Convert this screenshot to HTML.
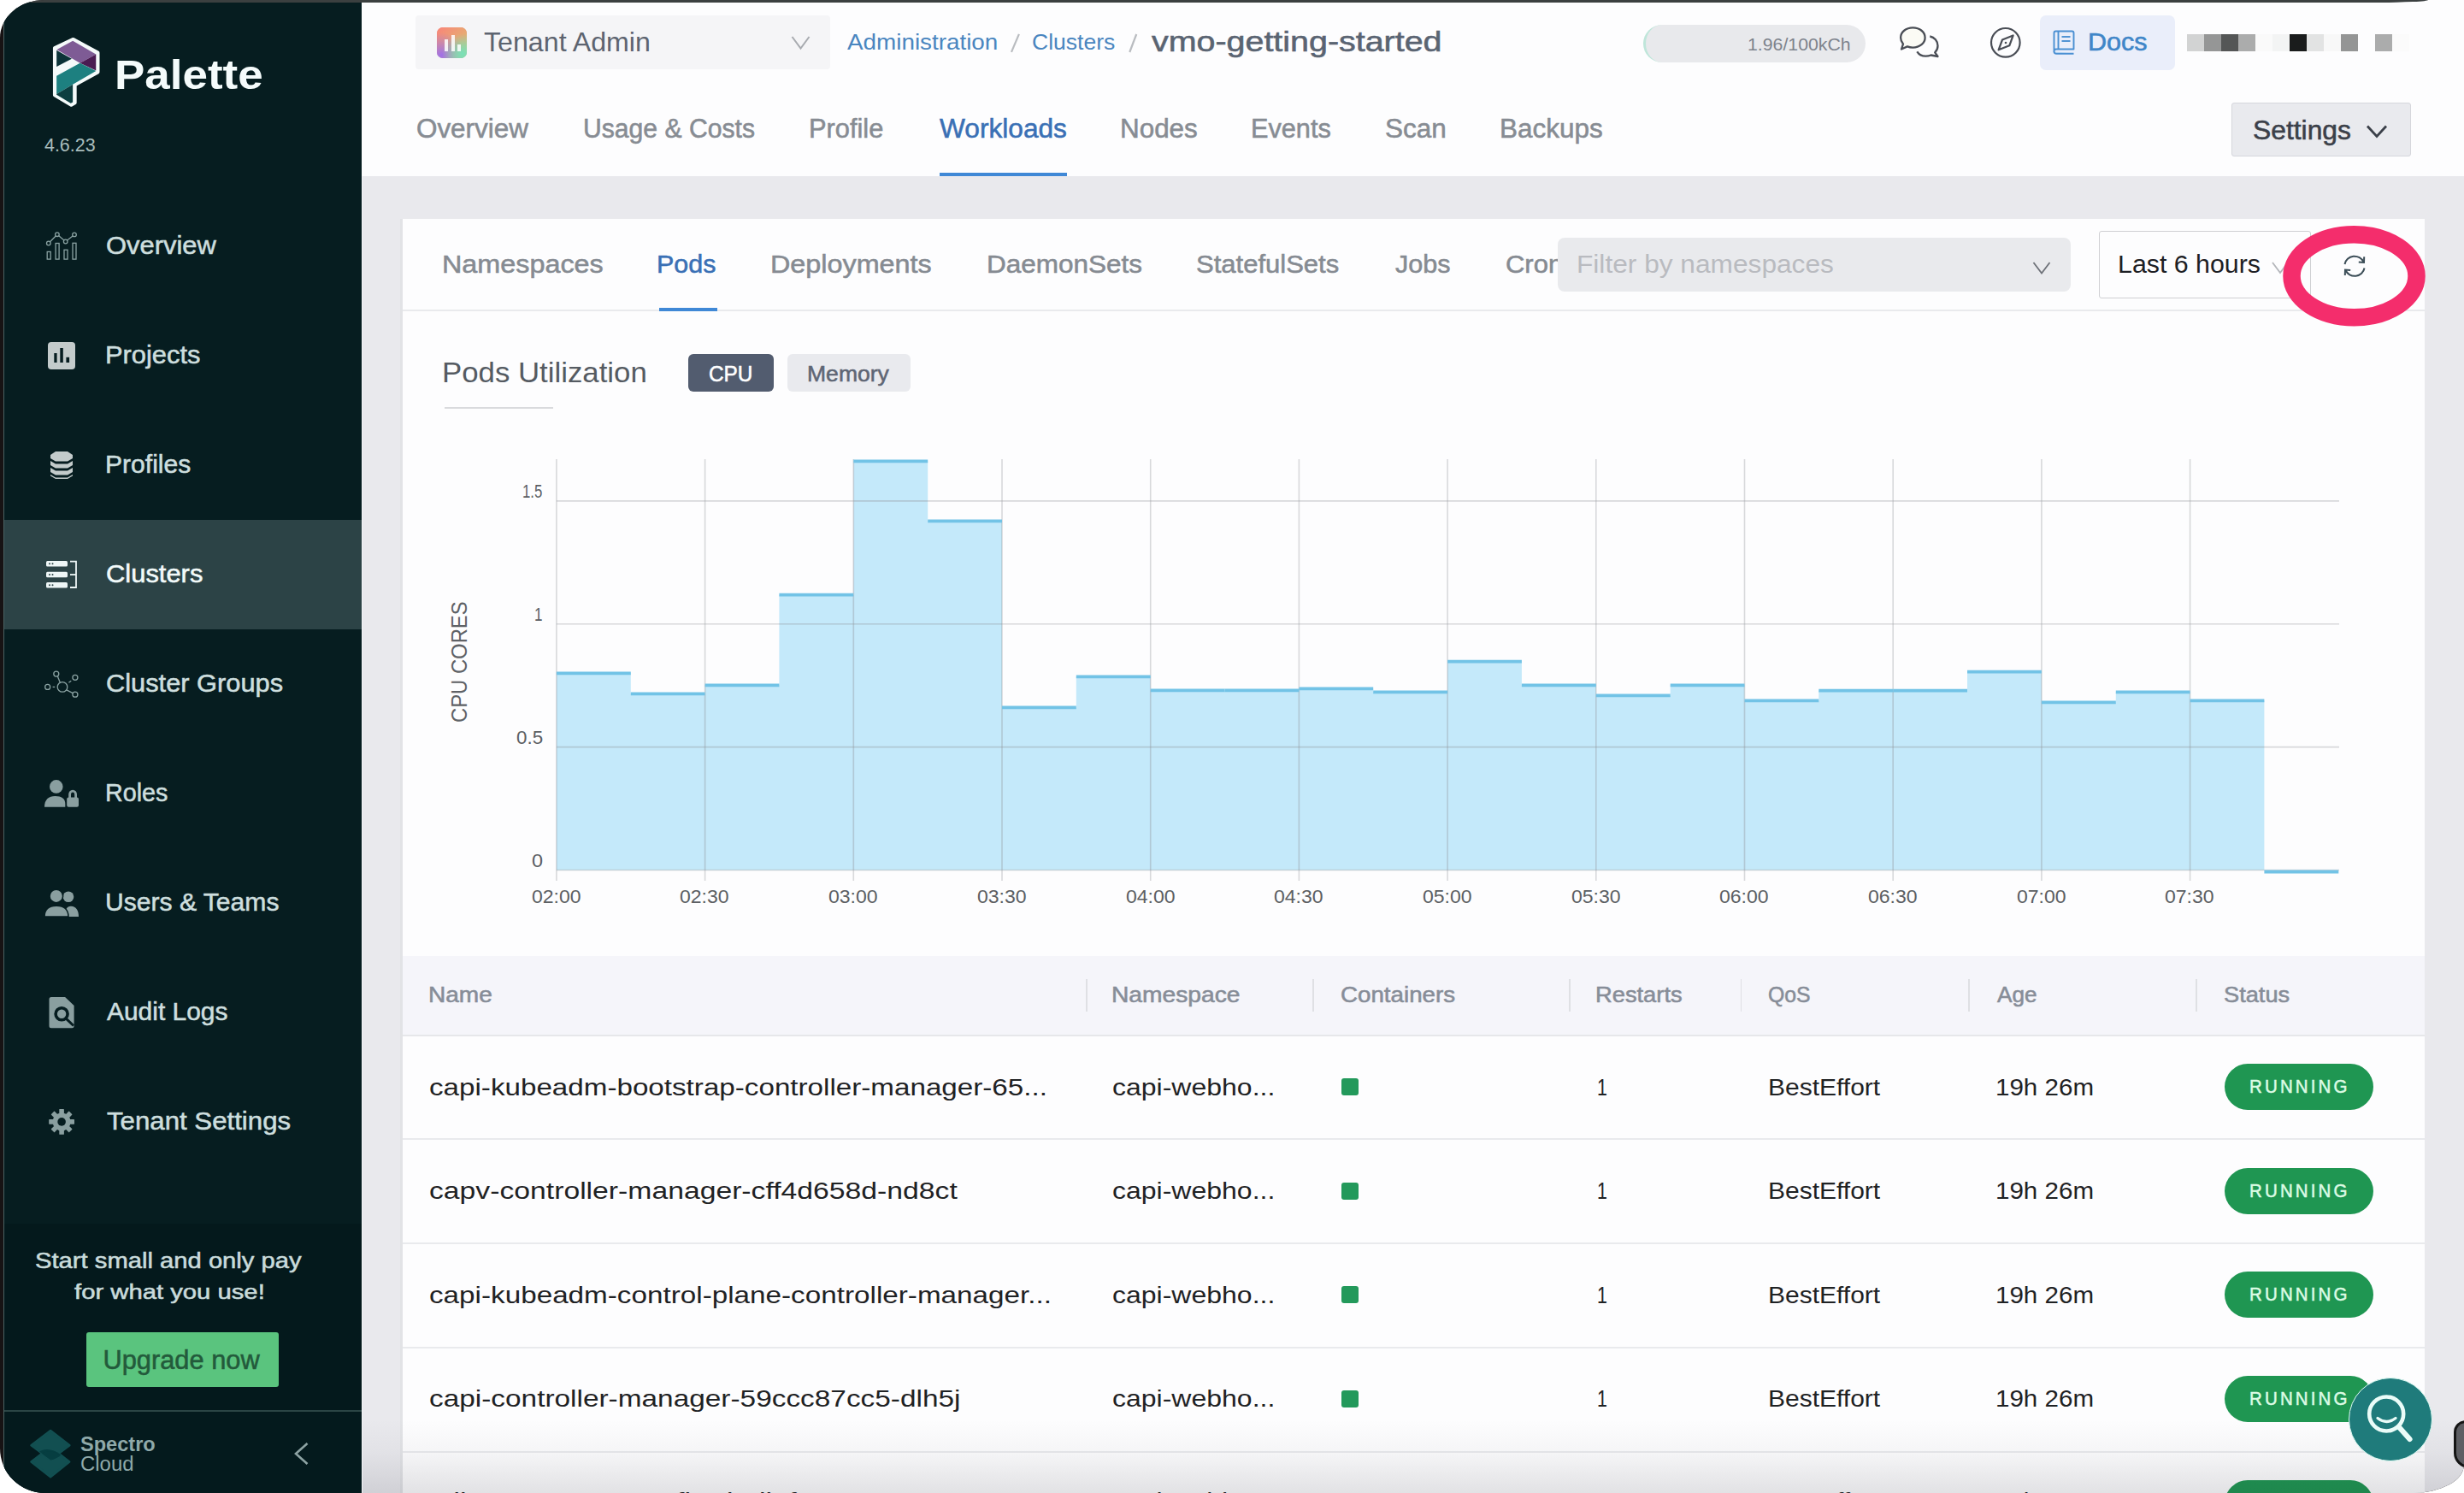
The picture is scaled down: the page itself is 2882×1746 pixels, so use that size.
<!DOCTYPE html>
<html><head><meta charset="utf-8"><style>
html,body{margin:0;padding:0;}
body{width:2882px;height:1746px;overflow:hidden;background:#fff;position:relative;font-family:"Liberation Sans",sans-serif;}
.abs{position:absolute;}
.t{position:absolute;font-family:"Liberation Sans",sans-serif;line-height:1;white-space:pre;transform-origin:0 0;}
#win{position:absolute;left:0;top:0;width:2882px;height:1746px;overflow:hidden;background:#171314;border-radius:52px 0 60px 53px / 44px 0 33px 52px;}
</style></head><body>
<div id="win">
  <!-- top line -->
  
  <!-- sidebar -->
  <div class="abs" style="left:4px;top:0;width:2px;height:1746px;background:#4a6262"></div>
  <div class="abs" style="left:5px;top:2px;width:418px;height:1744px;background:#061d20"></div>
  <div class="abs" style="left:5px;top:608px;width:418px;height:128px;background:#2c4346"></div>
  <div class="abs" style="left:5px;top:1431px;width:418px;height:219px;background:#04191c"></div>
  <div class="abs" style="left:5px;top:1649px;width:418px;height:2px;background:#2b4545"></div>
  <div class="abs" style="left:5px;top:1651px;width:418px;height:95px;background:#041a1d"></div>
  <div class="abs" style="left:101px;top:1558px;width:225px;height:64px;background:#5ac47e;border-radius:3px"></div>
  <!-- header -->
  <div class="abs" style="left:423px;top:0px;width:2459px;height:206px;background:#fdfdfe"></div>
  <div class="abs" style="left:0;top:0;width:2840px;height:2.5px;background:#3b4040;border-radius:0 0 60px 0 / 0 0 3px 0"></div>
  <div class="abs" style="left:486px;top:18px;width:485px;height:63px;background:#f5f5f7;border-radius:4px"></div>
  <div class="abs" style="left:511px;top:32px;width:35px;height:36px;border-radius:7px;background:linear-gradient(160deg,#f7867b 0%,#e0a070 30%,#b07ad0 60%,#7fd6b0 100%)"></div>
  <div class="abs" style="left:1922px;top:29px;width:260px;height:44px;background:#e8e9ec;border-radius:22px;border-left:3px solid #bfe6da;box-sizing:border-box"></div>
  <div class="abs" style="left:2386px;top:18px;width:158px;height:64px;background:#eaeefa;border-radius:7px"></div>
  <div class="abs" style="left:2558px;top:40px;width:20px;height:20px;background:#d2d3d3"></div><div class="abs" style="left:2578px;top:40px;width:20px;height:20px;background:#959696"></div><div class="abs" style="left:2598px;top:40px;width:20px;height:20px;background:#545656"></div><div class="abs" style="left:2618px;top:40px;width:20px;height:20px;background:#abacac"></div><div class="abs" style="left:2638px;top:40px;width:20px;height:20px;background:#fafafa"></div><div class="abs" style="left:2658px;top:40px;width:20px;height:20px;background:#f3f4f4"></div><div class="abs" style="left:2678px;top:40px;width:20px;height:20px;background:#1a1c1c"></div><div class="abs" style="left:2698px;top:40px;width:20px;height:20px;background:#e2e3e3"></div><div class="abs" style="left:2718px;top:40px;width:20px;height:20px;background:#f8f8f8"></div><div class="abs" style="left:2738px;top:40px;width:20px;height:20px;background:#949595"></div><div class="abs" style="left:2758px;top:40px;width:20px;height:20px;background:#fdfdfe"></div><div class="abs" style="left:2778px;top:40px;width:20px;height:20px;background:#abacac"></div><div class="abs" style="left:2798px;top:40px;width:20px;height:20px;background:#fbfbfb"></div>
  <div class="abs" style="left:1099px;top:202px;width:149px;height:4px;background:#3f88d6"></div>
  <div class="abs" style="left:2610px;top:120px;width:210px;height:63px;background:#e9eaee;border:1.5px solid #d5d7dc;border-radius:3px;box-sizing:border-box"></div>
  <!-- content bg -->
  <div class="abs" style="left:423px;top:206px;width:2459px;height:1540px;background:#e9e9ed"></div>
  <div class="abs" style="left:467.5px;top:256px;width:4px;height:1490px;background:#e2e3e6"></div>
  <!-- card -->
  <div class="abs" style="left:471px;top:256px;width:2365px;height:1490px;background:#fdfdfe"></div>
  <div class="abs" style="left:471px;top:362px;width:2365px;height:2px;background:#e9eaed"></div>
  <div class="abs" style="left:770.5px;top:359.5px;width:68.5px;height:4.5px;background:#3f88d6"></div>
  <div class="abs" style="left:2455px;top:270px;width:248px;height:79px;border:1.5px solid #cfd0d3;border-radius:3px;box-sizing:border-box"></div>
  <div class="abs" style="left:519.5px;top:476px;width:127px;height:2px;background:#d9dadd"></div>
  <div class="abs" style="left:805px;top:414px;width:100px;height:44px;background:#525c6f;border-radius:6px"></div>
  <div class="abs" style="left:921px;top:414px;width:144px;height:44px;background:#e9eaee;border-radius:6px"></div>
  <!-- table header -->
  <div class="abs" style="left:471px;top:1117.5px;width:2365px;height:93.5px;background:#f5f5fa"></div>
  <div class="abs" style="left:471px;top:1210px;width:2365px;height:2px;background:#e6e7ea"></div>
  <div class="abs" style="left:1569px;top:1261.0px;width:20px;height:20px;border-radius:3px;background:#23995b"></div>
<div class="abs" style="left:2602px;top:1244.0px;width:174px;height:54px;border-radius:27px;background:#1f9652"></div>
<div class="abs" style="left:1569px;top:1382.5px;width:20px;height:20px;border-radius:3px;background:#23995b"></div>
<div class="abs" style="left:2602px;top:1365.7px;width:174px;height:54px;border-radius:27px;background:#1f9652"></div>
<div class="abs" style="left:1569px;top:1504.0px;width:20px;height:20px;border-radius:3px;background:#23995b"></div>
<div class="abs" style="left:2602px;top:1487.4px;width:174px;height:54px;border-radius:27px;background:#1f9652"></div>
<div class="abs" style="left:1569px;top:1625.5px;width:20px;height:20px;border-radius:3px;background:#23995b"></div>
<div class="abs" style="left:2602px;top:1609.1px;width:174px;height:54px;border-radius:27px;background:#1f9652"></div>
<div class="abs" style="left:1569px;top:1747.0px;width:20px;height:20px;border-radius:3px;background:#23995b"></div>
<div class="abs" style="left:2602px;top:1730.8px;width:174px;height:54px;border-radius:27px;background:#1f9652"></div>
<div class="abs" style="left:471px;top:1331px;width:2365px;height:2px;background:#e9eaed"></div>
<div class="abs" style="left:471px;top:1453px;width:2365px;height:2px;background:#e9eaed"></div>
<div class="abs" style="left:471px;top:1575px;width:2365px;height:2px;background:#e9eaed"></div>
<div class="abs" style="left:471px;top:1696.5px;width:2365px;height:2px;background:#e9eaed"></div>
<div class="abs" style="left:1270px;top:1145px;width:1.5px;height:38px;background:#dfe0e4"></div>
<div class="abs" style="left:1535px;top:1145px;width:1.5px;height:38px;background:#dfe0e4"></div>
<div class="abs" style="left:1835.4px;top:1145px;width:1.5px;height:38px;background:#dfe0e4"></div>
<div class="abs" style="left:2035.6px;top:1145px;width:1.5px;height:38px;background:#dfe0e4"></div>
<div class="abs" style="left:2302px;top:1145px;width:1.5px;height:38px;background:#dfe0e4"></div>
<div class="abs" style="left:2568.4px;top:1145px;width:1.5px;height:38px;background:#dfe0e4"></div>
  <svg class="abs" style="left:0;top:0" width="2882" height="1746" viewBox="0 0 2882 1746">
<defs><clipPath id="fillclip"><polygon points="650.9,1017.5 650.9,787.3 737.8,787.3 737.8,811.4 824.6,811.4 824.6,801.3 911.4,801.3 911.4,695.7 998.3,695.7 998.3,539.4 1085.2,539.4 1085.2,609.3 1172.0,609.3 1172.0,827.4 1258.8,827.4 1258.8,791.3 1345.7,791.3 1345.7,807.4 1432.5,807.4 1432.5,807.4 1519.4,807.4 1519.4,805.3 1606.2,805.3 1606.2,809.4 1693.1,809.4 1693.1,773.6 1779.9,773.6 1779.9,801.3 1866.8,801.3 1866.8,813.4 1953.7,813.4 1953.7,801.3 2040.5,801.3 2040.5,819.4 2127.3,819.4 2127.3,807.7 2214.2,807.7 2214.2,807.7 2301.0,807.7 2301.0,785.7 2387.9,785.7 2387.9,821.4 2474.8,821.4 2474.8,809.4 2561.6,809.4 2561.6,819.4 2648.4,819.4 2648.4,1017.5 2648.4,1017.5" /></clipPath></defs>
<polygon points="650.9,1017.5 650.9,787.3 737.8,787.3 737.8,811.4 824.6,811.4 824.6,801.3 911.4,801.3 911.4,695.7 998.3,695.7 998.3,539.4 1085.2,539.4 1085.2,609.3 1172.0,609.3 1172.0,827.4 1258.8,827.4 1258.8,791.3 1345.7,791.3 1345.7,807.4 1432.5,807.4 1432.5,807.4 1519.4,807.4 1519.4,805.3 1606.2,805.3 1606.2,809.4 1693.1,809.4 1693.1,773.6 1779.9,773.6 1779.9,801.3 1866.8,801.3 1866.8,813.4 1953.7,813.4 1953.7,801.3 2040.5,801.3 2040.5,819.4 2127.3,819.4 2127.3,807.7 2214.2,807.7 2214.2,807.7 2301.0,807.7 2301.0,785.7 2387.9,785.7 2387.9,821.4 2474.8,821.4 2474.8,809.4 2561.6,809.4 2561.6,819.4 2648.4,819.4 2648.4,1017.5 2648.4,1017.5" fill="#c4e9fa" />
<g stroke="#9fa3a8" stroke-opacity="0.4" stroke-width="1.6"><line x1="650.9" y1="537" x2="650.9" y2="1030" /><line x1="824.6" y1="537" x2="824.6" y2="1030" /><line x1="998.3" y1="537" x2="998.3" y2="1030" /><line x1="1172.0" y1="537" x2="1172.0" y2="1030" /><line x1="1345.7" y1="537" x2="1345.7" y2="1030" /><line x1="1519.4" y1="537" x2="1519.4" y2="1030" /><line x1="1693.1" y1="537" x2="1693.1" y2="1030" /><line x1="1866.8" y1="537" x2="1866.8" y2="1030" /><line x1="2040.5" y1="537" x2="2040.5" y2="1030" /><line x1="2214.2" y1="537" x2="2214.2" y2="1030" /><line x1="2387.9" y1="537" x2="2387.9" y2="1030" /><line x1="2561.6" y1="537" x2="2561.6" y2="1030" /><line x1="650.9" y1="585.9" x2="2736" y2="585.9" /><line x1="650.9" y1="729.8" x2="2736" y2="729.8" /><line x1="650.9" y1="873.6" x2="2736" y2="873.6" /><line x1="650.9" y1="1017.5" x2="2736" y2="1017.5" /></g>
<g stroke="#5f8596" stroke-opacity="0.06" stroke-width="1.6" clip-path="url(#fillclip)"><line x1="650.9" y1="537" x2="650.9" y2="1030" /><line x1="824.6" y1="537" x2="824.6" y2="1030" /><line x1="998.3" y1="537" x2="998.3" y2="1030" /><line x1="1172.0" y1="537" x2="1172.0" y2="1030" /><line x1="1345.7" y1="537" x2="1345.7" y2="1030" /><line x1="1519.4" y1="537" x2="1519.4" y2="1030" /><line x1="1693.1" y1="537" x2="1693.1" y2="1030" /><line x1="1866.8" y1="537" x2="1866.8" y2="1030" /><line x1="2040.5" y1="537" x2="2040.5" y2="1030" /><line x1="2214.2" y1="537" x2="2214.2" y2="1030" /><line x1="2387.9" y1="537" x2="2387.9" y2="1030" /><line x1="2561.6" y1="537" x2="2561.6" y2="1030" /><line x1="650.9" y1="585.9" x2="2736" y2="585.9" /><line x1="650.9" y1="729.8" x2="2736" y2="729.8" /><line x1="650.9" y1="873.6" x2="2736" y2="873.6" /><line x1="650.9" y1="1017.5" x2="2736" y2="1017.5" /></g>
<g stroke="#72c3e6" stroke-width="3.8"><line x1="650.9" y1="787.3" x2="737.8" y2="787.3" /><line x1="737.8" y1="811.4" x2="824.6" y2="811.4" /><line x1="824.6" y1="801.3" x2="911.4" y2="801.3" /><line x1="911.4" y1="695.7" x2="998.3" y2="695.7" /><line x1="998.3" y1="539.4" x2="1085.2" y2="539.4" /><line x1="1085.2" y1="609.3" x2="1172.0" y2="609.3" /><line x1="1172.0" y1="827.4" x2="1258.8" y2="827.4" /><line x1="1258.8" y1="791.3" x2="1345.7" y2="791.3" /><line x1="1345.7" y1="807.4" x2="1432.5" y2="807.4" /><line x1="1432.5" y1="807.4" x2="1519.4" y2="807.4" /><line x1="1519.4" y1="805.3" x2="1606.2" y2="805.3" /><line x1="1606.2" y1="809.4" x2="1693.1" y2="809.4" /><line x1="1693.1" y1="773.6" x2="1779.9" y2="773.6" /><line x1="1779.9" y1="801.3" x2="1866.8" y2="801.3" /><line x1="1866.8" y1="813.4" x2="1953.7" y2="813.4" /><line x1="1953.7" y1="801.3" x2="2040.5" y2="801.3" /><line x1="2040.5" y1="819.4" x2="2127.3" y2="819.4" /><line x1="2127.3" y1="807.7" x2="2214.2" y2="807.7" /><line x1="2214.2" y1="807.7" x2="2301.0" y2="807.7" /><line x1="2301.0" y1="785.7" x2="2387.9" y2="785.7" /><line x1="2387.9" y1="821.4" x2="2474.8" y2="821.4" /><line x1="2474.8" y1="809.4" x2="2561.6" y2="809.4" /><line x1="2561.6" y1="819.4" x2="2648.4" y2="819.4" /><line x1="2648.4" y1="1019.5" x2="2735.3" y2="1019.5" /></g>
</svg>
  <div class="abs" style="left:1822px;top:278px;width:600px;height:63px;background:#e9eaed;border-radius:8px"></div>
  <div class="t" style="left:133.68px;top:63.5px;font-size:47.82px;color:#f4fbfb;font-weight:bold;;transform:scaleX(1.1072);">Palette</div>
<div class="t" style="left:52.0px;top:159.0px;font-size:21.8px;color:#a9bdbd;;transform:scaleX(0.9833);">4.6.23</div>
<div class="t" style="left:123.97px;top:272.1px;font-size:29.94px;color:#cddede;-webkit-text-stroke:0.55px currentColor;;transform:scaleX(1.032);">Overview</div>
<div class="t" style="left:122.94px;top:400.1px;font-size:29.94px;color:#cddede;-webkit-text-stroke:0.55px currentColor;;transform:scaleX(1.0302);">Projects</div>
<div class="t" style="left:122.99px;top:528.1px;font-size:29.94px;color:#cddede;-webkit-text-stroke:0.55px currentColor;;transform:scaleX(1.0041);">Profiles</div>
<div class="t" style="left:123.97px;top:656.1px;font-size:29.94px;color:#f2fafa;-webkit-text-stroke:0.55px currentColor;;transform:scaleX(1.0324);">Clusters</div>
<div class="t" style="left:123.97px;top:784.1px;font-size:29.94px;color:#cddede;-webkit-text-stroke:0.55px currentColor;;transform:scaleX(1.0285);">Cluster Groups</div>
<div class="t" style="left:123.08px;top:912.1px;font-size:29.94px;color:#cddede;-webkit-text-stroke:0.55px currentColor;;transform:scaleX(0.9595);">Roles</div>
<div class="t" style="left:122.99px;top:1040.1px;font-size:29.94px;color:#cddede;-webkit-text-stroke:0.55px currentColor;;transform:scaleX(1.005);">Users &amp; Teams</div>
<div class="t" style="left:125.0px;top:1168.1px;font-size:29.94px;color:#cddede;-webkit-text-stroke:0.55px currentColor;;">Audit Logs</div>
<div class="t" style="left:125.0px;top:1296.1px;font-size:29.94px;color:#cddede;-webkit-text-stroke:0.55px currentColor;;transform:scaleX(1.0422);">Tenant Settings</div>
<div class="t" style="left:40.9px;top:1461.0px;font-size:26.45px;color:#c9dbdb;-webkit-text-stroke:0.55px currentColor;;transform:scaleX(1.1046);">Start small and only pay</div>
<div class="t" style="left:86.5px;top:1498.9px;font-size:24.84px;color:#c9dbdb;-webkit-text-stroke:0.55px currentColor;;transform:scaleX(1.1782);">for what you use!</div>
<div class="t" style="left:120.49px;top:1575.6px;font-size:30.81px;color:#235a3b;-webkit-text-stroke:0.55px currentColor;;">Upgrade now</div>
<div class="t" style="left:94.21px;top:1678.0px;font-size:23.69px;color:#8fa9a9;font-weight:bold;;transform:scaleX(0.9943);">Spectro</div>
<div class="t" style="left:94.02px;top:1699.6px;font-size:24.42px;color:#8fa9a9;;transform:scaleX(0.9806);">Cloud</div>
<div class="t" style="left:565.5px;top:33.5px;font-size:31.25px;color:#5d6470;;transform:scaleX(1.0293);">Tenant Admin</div>
<div class="t" style="left:991.0px;top:36.0px;font-size:26.31px;color:#4a86c0;;transform:scaleX(1.0582);">Administration</div>
<div class="t" style="left:1206.99px;top:36.0px;font-size:26.31px;color:#4a86c0;;transform:scaleX(1.0084);">Clusters</div>
<div class="t" style="left:1346.7px;top:32.3px;font-size:33.54px;color:#5a6472;-webkit-text-stroke:0.55px currentColor;;transform:scaleX(1.1753);">vmo-getting-started</div>
<div class="t" style="left:2043.98px;top:41.7px;font-size:20.78px;color:#7d838c;;transform:scaleX(1.0241);">1.96/100kCh</div>
<div class="t" style="left:2441.61px;top:35.0px;font-size:29.22px;color:#3f86c8;-webkit-text-stroke:0.55px currentColor;;transform:scaleX(1.0453);">Docs</div>
<div class="t" style="left:486.88px;top:136.2px;font-size:30.81px;color:#878c93;-webkit-text-stroke:0.55px currentColor;;transform:scaleX(1.0195);">Overview</div>
<div class="t" style="left:681.64px;top:136.2px;font-size:30.81px;color:#878c93;-webkit-text-stroke:0.55px currentColor;;transform:scaleX(0.9788);">Usage &amp; Costs</div>
<div class="t" style="left:946.0px;top:136.2px;font-size:30.81px;color:#878c93;-webkit-text-stroke:0.55px currentColor;;">Profile</div>
<div class="t" style="left:1099.0px;top:136.2px;font-size:30.81px;color:#3a70b5;-webkit-text-stroke:0.55px currentColor;;transform:scaleX(1.0278);">Workloads</div>
<div class="t" style="left:1310.16px;top:136.2px;font-size:30.81px;color:#878c93;-webkit-text-stroke:0.55px currentColor;;transform:scaleX(1.0198);">Nodes</div>
<div class="t" style="left:1462.81px;top:136.2px;font-size:30.81px;color:#878c93;-webkit-text-stroke:0.55px currentColor;;transform:scaleX(0.9957);">Events</div>
<div class="t" style="left:1620.28px;top:136.2px;font-size:30.81px;color:#878c93;-webkit-text-stroke:0.55px currentColor;;transform:scaleX(1.0221);">Scan</div>
<div class="t" style="left:1753.96px;top:136.2px;font-size:30.81px;color:#878c93;-webkit-text-stroke:0.55px currentColor;;transform:scaleX(1.0216);">Backups</div>
<div class="t" style="left:2634.61px;top:136.0px;font-size:31.98px;color:#3b4049;-webkit-text-stroke:0.55px currentColor;;transform:scaleX(0.9947);">Settings</div>
<div class="t" style="left:516.85px;top:294.0px;font-size:30.09px;color:#868b92;-webkit-text-stroke:0.55px currentColor;;transform:scaleX(1.0751);">Namespaces</div>
<div class="t" style="left:768.48px;top:294.0px;font-size:30.09px;color:#3a70b5;-webkit-text-stroke:0.55px currentColor;;transform:scaleX(1.0121);">Pods</div>
<div class="t" style="left:900.85px;top:294.0px;font-size:30.09px;color:#868b92;-webkit-text-stroke:0.55px currentColor;;transform:scaleX(1.0751);">Deployments</div>
<div class="t" style="left:1153.51px;top:294.0px;font-size:30.09px;color:#868b92;-webkit-text-stroke:0.55px currentColor;;transform:scaleX(1.0468);">DaemonSets</div>
<div class="t" style="left:1398.97px;top:294.0px;font-size:30.09px;color:#868b92;-webkit-text-stroke:0.55px currentColor;;transform:scaleX(1.0311);">StatefulSets</div>
<div class="t" style="left:1632.0px;top:294.0px;font-size:30.09px;color:#868b92;-webkit-text-stroke:0.55px currentColor;;transform:scaleX(1.0159);">Jobs</div>
<div class="t" style="left:1844.29px;top:293.6px;font-size:29.94px;color:#b9bbc0;;transform:scaleX(1.0574);">Filter by namespaces</div>
<div class="t" style="left:2476.96px;top:294.2px;font-size:29.8px;color:#1d2024;;transform:scaleX(1.0186);">Last 6 hours</div>
<div class="t" style="left:517.43px;top:418.7px;font-size:33.58px;color:#555b62;;transform:scaleX(1.036);">Pods Utilization</div>
<div class="t" style="left:829.07px;top:423.5px;font-size:26.16px;color:#ffffff;-webkit-text-stroke:0.55px currentColor;;transform:scaleX(0.9321);">CPU</div>
<div class="t" style="left:943.57px;top:423.5px;font-size:26.16px;color:#5f6675;-webkit-text-stroke:0.55px currentColor;;transform:scaleX(1.0151);">Memory</div>
<div class="t" style="left:611.06px;top:562.9px;font-size:22.82px;color:#5c5f63;;transform:scaleX(0.7367);">1.5</div>
<div class="t" style="left:624.74px;top:706.8px;font-size:22.82px;color:#5c5f63;;transform:scaleX(0.75);">1</div>
<div class="t" style="left:603.52px;top:850.7px;font-size:22.82px;color:#5c5f63;;transform:scaleX(0.98);">0.5</div>
<div class="t" style="left:621.57px;top:994.6px;font-size:22.82px;color:#5c5f63;;transform:scaleX(1.0273);">0</div>
<div class="t" style="left:621.71px;top:1037.6px;font-size:22.09px;color:#5c5f63;;transform:scaleX(1.0426);">02:00</div>
<div class="t" style="left:795.41px;top:1037.6px;font-size:22.09px;color:#5c5f63;;transform:scaleX(1.0426);">02:30</div>
<div class="t" style="left:969.11px;top:1037.6px;font-size:22.09px;color:#5c5f63;;transform:scaleX(1.0426);">03:00</div>
<div class="t" style="left:1142.81px;top:1037.6px;font-size:22.09px;color:#5c5f63;;transform:scaleX(1.0426);">03:30</div>
<div class="t" style="left:1316.51px;top:1037.6px;font-size:22.09px;color:#5c5f63;;transform:scaleX(1.0426);">04:00</div>
<div class="t" style="left:1490.21px;top:1037.6px;font-size:22.09px;color:#5c5f63;;transform:scaleX(1.0426);">04:30</div>
<div class="t" style="left:1663.91px;top:1037.6px;font-size:22.09px;color:#5c5f63;;transform:scaleX(1.0426);">05:00</div>
<div class="t" style="left:1837.61px;top:1037.6px;font-size:22.09px;color:#5c5f63;;transform:scaleX(1.0426);">05:30</div>
<div class="t" style="left:2011.31px;top:1037.6px;font-size:22.09px;color:#5c5f63;;transform:scaleX(1.0426);">06:00</div>
<div class="t" style="left:2185.01px;top:1037.6px;font-size:22.09px;color:#5c5f63;;transform:scaleX(1.0426);">06:30</div>
<div class="t" style="left:2358.71px;top:1037.6px;font-size:22.09px;color:#5c5f63;;transform:scaleX(1.0426);">07:00</div>
<div class="t" style="left:2532.41px;top:1037.6px;font-size:22.09px;color:#5c5f63;;transform:scaleX(1.0426);">07:30</div>
<div class="t" style="left:501.09px;top:1151.3px;font-size:25.44px;color:#878d98;-webkit-text-stroke:0.55px currentColor;;transform:scaleX(1.1031);">Name</div>
<div class="t" style="left:1300.28px;top:1151.3px;font-size:25.44px;color:#878d98;-webkit-text-stroke:0.55px currentColor;;transform:scaleX(1.109);">Namespace</div>
<div class="t" style="left:1567.91px;top:1151.3px;font-size:25.44px;color:#878d98;-webkit-text-stroke:0.55px currentColor;;transform:scaleX(1.0902);">Containers</div>
<div class="t" style="left:1866.35px;top:1151.3px;font-size:25.44px;color:#878d98;-webkit-text-stroke:0.55px currentColor;;transform:scaleX(1.0728);">Restarts</div>
<div class="t" style="left:2068.33px;top:1151.3px;font-size:25.44px;color:#878d98;-webkit-text-stroke:0.55px currentColor;;transform:scaleX(0.9735);">QoS</div>
<div class="t" style="left:2335.7px;top:1151.3px;font-size:25.44px;color:#878d98;-webkit-text-stroke:0.55px currentColor;;transform:scaleX(1.0289);">Age</div>
<div class="t" style="left:2600.93px;top:1151.3px;font-size:25.44px;color:#878d98;-webkit-text-stroke:0.55px currentColor;;transform:scaleX(1.0704);">Status</div>
<div class="t" style="left:502.14px;top:1256.8px;font-size:28.49px;color:#1f2224;;transform:scaleX(1.1648);">capi-kubeadm-bootstrap-controller-manager-65...</div>
<div class="t" style="left:1301.38px;top:1256.8px;font-size:28.49px;color:#1f2224;;transform:scaleX(1.1235);">capi-webho...</div>
<div class="t" style="left:1867.81px;top:1256.8px;font-size:28.49px;color:#1f2224;;transform:scaleX(0.75);">1</div>
<div class="t" style="left:2068.39px;top:1256.8px;font-size:28.49px;color:#1f2224;;transform:scaleX(1.0528);">BestEffort</div>
<div class="t" style="left:2333.63px;top:1256.8px;font-size:28.49px;color:#1f2224;;transform:scaleX(1.0374);">19h 26m</div>
<div class="t" style="left:2630.9px;top:1259.3px;font-size:22.82px;color:#dcfbe4;-webkit-text-stroke:0.55px currentColor;letter-spacing:3.5px;transform:scaleX(0.8984);">RUNNING</div>
<div class="t" style="left:502.12px;top:1378.3px;font-size:28.49px;color:#1f2224;;transform:scaleX(1.1835);">capv-controller-manager-cff4d658d-nd8ct</div>
<div class="t" style="left:1301.38px;top:1378.3px;font-size:28.49px;color:#1f2224;;transform:scaleX(1.1235);">capi-webho...</div>
<div class="t" style="left:1867.81px;top:1378.3px;font-size:28.49px;color:#1f2224;;transform:scaleX(0.75);">1</div>
<div class="t" style="left:2068.39px;top:1378.3px;font-size:28.49px;color:#1f2224;;transform:scaleX(1.0528);">BestEffort</div>
<div class="t" style="left:2333.63px;top:1378.3px;font-size:28.49px;color:#1f2224;;transform:scaleX(1.0374);">19h 26m</div>
<div class="t" style="left:2630.9px;top:1380.8px;font-size:22.82px;color:#dcfbe4;-webkit-text-stroke:0.55px currentColor;letter-spacing:3.5px;transform:scaleX(0.8984);">RUNNING</div>
<div class="t" style="left:502.13px;top:1499.8px;font-size:28.49px;color:#1f2224;;transform:scaleX(1.167);">capi-kubeadm-control-plane-controller-manager...</div>
<div class="t" style="left:1301.38px;top:1499.8px;font-size:28.49px;color:#1f2224;;transform:scaleX(1.1235);">capi-webho...</div>
<div class="t" style="left:1867.81px;top:1499.8px;font-size:28.49px;color:#1f2224;;transform:scaleX(0.75);">1</div>
<div class="t" style="left:2068.39px;top:1499.8px;font-size:28.49px;color:#1f2224;;transform:scaleX(1.0528);">BestEffort</div>
<div class="t" style="left:2333.63px;top:1499.8px;font-size:28.49px;color:#1f2224;;transform:scaleX(1.0374);">19h 26m</div>
<div class="t" style="left:2630.9px;top:1502.3px;font-size:22.82px;color:#dcfbe4;-webkit-text-stroke:0.55px currentColor;letter-spacing:3.5px;transform:scaleX(0.8984);">RUNNING</div>
<div class="t" style="left:502.13px;top:1621.3px;font-size:28.49px;color:#1f2224;;transform:scaleX(1.1718);">capi-controller-manager-59ccc87cc5-dlh5j</div>
<div class="t" style="left:1301.38px;top:1621.3px;font-size:28.49px;color:#1f2224;;transform:scaleX(1.1235);">capi-webho...</div>
<div class="t" style="left:1867.81px;top:1621.3px;font-size:28.49px;color:#1f2224;;transform:scaleX(0.75);">1</div>
<div class="t" style="left:2068.39px;top:1621.3px;font-size:28.49px;color:#1f2224;;transform:scaleX(1.0528);">BestEffort</div>
<div class="t" style="left:2333.63px;top:1621.3px;font-size:28.49px;color:#1f2224;;transform:scaleX(1.0374);">19h 26m</div>
<div class="t" style="left:2630.9px;top:1623.8px;font-size:22.82px;color:#dcfbe4;-webkit-text-stroke:0.55px currentColor;letter-spacing:3.5px;transform:scaleX(0.8984);">RUNNING</div>
<div class="abs" style="left:1700px;top:270px;width:122px;height:80px;overflow:hidden"><div class="t" style="left:60.5px;top:24.0px;font-size:30.09px;color:#868b92;-webkit-text-stroke:0.55px currentColor;;transform:scaleX(1.03)">CronJobs</div></div>
<div class="t" style="left:524.7px;top:844.8px;font-size:25.29px;color:#5f6266;transform:rotate(-90deg) scaleX(0.9423)">CPU CORES</div>
<div class="t" style="left:502.1px;top:1741.0px;font-size:28.49px;color:#1f2224;;transform:scaleX(1.2008);">cdi-operator-77795fb4d5-jl8f7</div>
<div class="t" style="left:1301.38px;top:1741.0px;font-size:28.49px;color:#1f2224;;transform:scaleX(1.1235);">capi-webho...</div>
<div class="t" style="left:1867.81px;top:1741.0px;font-size:28.49px;color:#1f2224;;transform:scaleX(0.75);">1</div>
<div class="t" style="left:2068.39px;top:1741.0px;font-size:28.49px;color:#1f2224;;transform:scaleX(1.0528);">BestEffort</div>
<div class="t" style="left:2333.63px;top:1741.0px;font-size:28.49px;color:#1f2224;;transform:scaleX(1.0374);">19h 26m</div>
  <!-- Palette logo -->
<svg class="abs" style="left:55px;top:40px" width="70" height="90" viewBox="0 0 1161 1493">
 <polygon points="510,100 985,360 985,735 540,980 540,1330 470,1370 150,1180 150,270" fill="#f4fafa" stroke="#f4fafa" stroke-width="70" stroke-linejoin="round"/>
 <polygon points="190,300 500,130 950,390 640,560" fill="#7e5b95"/>
 <polygon points="185,310 480,475 185,630" fill="#0b3338"/>
 <polygon points="640,560 950,390 950,705" fill="#4a1b52"/>
 <polygon points="185,810 640,560 950,715 500,975 185,1160" fill="#1d8080"/>
 <polygon points="185,1160 500,975 500,1320 460,1340 185,1175" fill="#0c3e40"/>
</svg>
<!-- sidebar icons -->
<svg class="abs" style="left:45px;top:260px" width="55" height="55" viewBox="0 0 55 55" fill="none" stroke="#8aa2a2" stroke-width="1.3">
 <polyline points="11.8,24.5 21.9,14.2 31.7,22.5 42,14.4"/>
 <circle cx="11.8" cy="24.5" r="2.3" fill="#061d20"/><circle cx="21.9" cy="14.2" r="2.3" fill="#061d20"/><circle cx="31.7" cy="22.5" r="2.3" fill="#061d20"/><circle cx="42" cy="14.4" r="2.3" fill="#061d20"/>
 <rect x="10.2" y="34.4" width="4" height="8.7"/><rect x="20.1" y="24.5" width="4" height="18.6"/><rect x="30" y="32.2" width="4" height="10.9"/><rect x="40" y="24.3" width="4" height="18.8"/>
</svg>
<svg class="abs" style="left:56px;top:400px" width="32" height="32" viewBox="0 0 32 32">
 <rect x="0" y="0" width="32" height="32" rx="4" fill="#c3cbcb"/>
 <rect x="7.3" y="13" width="3.3" height="11" fill="#061d20"/><rect x="14.3" y="7" width="3.5" height="17" fill="#061d20"/><rect x="21.4" y="17.8" width="3.7" height="6.2" fill="#061d20"/>
</svg>
<svg class="abs" style="left:58px;top:527px" width="28" height="34" viewBox="0 0 28 34">
 <path d="M1,5 L7,1 L21,1 L27,5 L27,9 L21,12.5 L7,12.5 L1,9 Z" fill="#c3cbcb"/>
 <path d="M1,12 L7,15.5 L21,15.5 L27,12 L27,17 L21,20.5 L7,20.5 L1,17 Z" fill="#c3cbcb"/>
 <path d="M1,20 L7,23.5 L21,23.5 L27,20 L27,25 L21,28.5 L7,28.5 L1,25 Z" fill="#c3cbcb"/>
 <path d="M1,28 L7,31.5 L21,31.5 L27,28 L27,29.5 L21,33 L7,33 L1,29.5 Z" fill="#c3cbcb"/>
</svg>
<svg class="abs" style="left:54px;top:655px" width="37" height="34" viewBox="0 0 37 34">
 <rect x="0" y="1" width="25" height="6.5" rx="1.5" fill="#eef6f6"/><rect x="0" y="13.8" width="25" height="6.5" rx="1.5" fill="#eef6f6"/><rect x="0" y="26" width="25" height="6.5" rx="1.5" fill="#eef6f6"/>
 <g fill="#2c4346"><circle cx="4" cy="4.2" r="1"/><circle cx="7.5" cy="4.2" r="1"/><circle cx="4" cy="17" r="1"/><circle cx="7.5" cy="17" r="1"/><circle cx="4" cy="29.2" r="1"/><circle cx="7.5" cy="29.2" r="1"/></g>
 <polyline points="28,1.7 35,1.7 35,32 28,32" fill="none" stroke="#eef6f6" stroke-width="1.8"/><line x1="28" y1="17" x2="35" y2="17" stroke="#eef6f6" stroke-width="1.8"/>
</svg>
<svg class="abs" style="left:45px;top:775px" width="55" height="55" viewBox="0 0 55 55" fill="none" stroke="#8aa2a2" stroke-width="1.3">
 <circle cx="28" cy="28.4" r="5.8"/><circle cx="20.8" cy="13.1" r="3"/><circle cx="42.9" cy="17.3" r="3"/><circle cx="10.7" cy="28.4" r="3"/><circle cx="42.9" cy="37.2" r="3"/>
 <line x1="22.3" y1="15.8" x2="25.3" y2="23.2"/><line x1="32.8" y1="31.8" x2="40.3" y2="35.6"/><line x1="16.6" y1="28.4" x2="19.2" y2="28.4"/><line x1="35.4" y1="23.2" x2="38.3" y2="21.3"/>
</svg>
<svg class="abs" style="left:45px;top:900px" width="55" height="55" viewBox="0 0 55 55" fill="#8a9fa0">
 <circle cx="20.8" cy="19.9" r="7.8"/>
 <path d="M7,43.8 C7,35 12,31 19.5,31 C27,31 31.3,34 31.3,40 L31.3,43.8 Z"/>
 <rect x="33.2" y="32.4" width="13.8" height="11.4" rx="2"/>
 <path d="M36.6,33 L36.6,29 A3.5,3.8 0 0 1 43.6,29 L43.6,33" fill="none" stroke="#8a9fa0" stroke-width="2.8"/>
</svg>
<svg class="abs" style="left:45px;top:1030px" width="55" height="55" viewBox="0 0 55 55" fill="#8a9fa0">
 <circle cx="35" cy="18.8" r="6.3"/>
 <path d="M31,42 C31,34 33,29.8 38,29.8 C44,29.8 47,35 47,42 Z"/>
 <circle cx="20.8" cy="17.9" r="7.8" stroke="#061d20" stroke-width="1.6"/>
 <path d="M7,42 C7,34 12,29.1 21,29.1 C30,29.1 35,34 35,42 Z" stroke="#061d20" stroke-width="1.6"/>
</svg>
<svg class="abs" style="left:45px;top:1155px" width="55" height="55" viewBox="0 0 55 55">
 <path d="M15,10.9 L31.1,10.9 L41.6,21 L41.6,44.7 A2.5,2.5 0 0 1 39.1,47.2 L15,47.2 A2.5,2.5 0 0 1 12.5,44.7 L12.5,13.4 A2.5,2.5 0 0 1 15,10.9 Z" fill="#8a9fa0"/>
 <circle cx="27.1" cy="30.8" r="7" fill="none" stroke="#061d20" stroke-width="3.6"/>
 <line x1="32.5" y1="36.3" x2="41" y2="44.5" stroke="#061d20" stroke-width="3"/>
</svg>
<svg class="abs" style="left:45px;top:1285px" width="55" height="55" viewBox="0 0 55 55">
 <g transform="translate(27.1,26.9)" fill="#8a9fa0">
  <circle r="10.5"/>
  <g id="teeth"><rect x="-2.8" y="-14.9" width="5.6" height="6" rx="0.6"/><rect x="-2.8" y="8.9" width="5.6" height="6" rx="0.6"/><rect x="-14.9" y="-2.8" width="6" height="5.6" rx="0.6"/><rect x="8.9" y="-2.8" width="6" height="5.6" rx="0.6"/></g>
  <g transform="rotate(45)"><rect x="-2.8" y="-14.9" width="5.6" height="6" rx="0.6"/><rect x="-2.8" y="8.9" width="5.6" height="6" rx="0.6"/><rect x="-14.9" y="-2.8" width="6" height="5.6" rx="0.6"/><rect x="8.9" y="-2.8" width="6" height="5.6" rx="0.6"/></g>
  <circle r="4.8" fill="#061d20"/>
 </g>
</svg>
<!-- spectro cloud logo -->
<svg class="abs" style="left:34px;top:1670px" width="50" height="60" viewBox="0 0 50 60">
 <g stroke-linejoin="round" stroke-width="2.5">
 <polygon points="2.5,39.6 25.1,22.2 47.2,39.6 25.1,57.2" fill="#124f51" stroke="#124f51"/>
 <polygon points="2.5,20.3 25.1,3 47.4,20.3 25.1,37" fill="#124f51" stroke="#124f51"/>
 <path d="M12,27.5 C18,23.5 28,24 37.5,31.5 L25.1,37 Z" fill="#063e41" stroke="none"/>
 <path d="M15,29.7 C22,26 30,27 36.5,32.5 C30,36.5 26,38 25.1,37.2 Z" fill="#063e41" stroke="none"/>
 </g>
</svg>
<svg class="abs" style="left:340px;top:1684px" width="25" height="32" viewBox="0 0 25 32"><polyline points="19.5,4 6,16 19.5,28" fill="none" stroke="#8da3a3" stroke-width="2.6"/></svg>
<!-- tenant icon bars & chevron -->
<div class="abs" style="left:511px;top:32px;width:35px;height:36px;border-radius:7px;background:radial-gradient(circle at 85% 85%, #78e0b8 0%, rgba(120,224,184,0) 55%), radial-gradient(circle at 15% 90%, #a070e8 0%, rgba(160,112,232,0) 60%), linear-gradient(135deg,#f98479 0%,#e9a873 55%,#b6d48a 100%)"></div>
<div class="abs" style="left:519.5px;top:46px;width:4px;height:14px;background:rgba(255,255,255,0.85)"></div>
<div class="abs" style="left:527.5px;top:40.5px;width:4px;height:19.5px;background:rgba(255,255,255,0.85)"></div>
<div class="abs" style="left:535.3px;top:51.7px;width:4px;height:8.3px;background:rgba(255,255,255,0.85)"></div>
<svg class="abs" style="left:920px;top:38px" width="32" height="24" viewBox="0 0 32 24"><polyline points="6.5,5 16.5,18.6 26.5,5" fill="none" stroke="#a8abb0" stroke-width="2"/></svg>
<!-- breadcrumb slashes -->
<svg class="abs" style="left:1170px;top:30px" width="180" height="40" viewBox="1170 30 180 40" stroke="#b9bcc0" stroke-width="2.2"><line x1="1191.9" y1="39.9" x2="1183" y2="60.9"/><line x1="1329.2" y1="40" x2="1321.3" y2="61"/></svg>
<!-- chat icon -->
<svg class="abs" style="left:2215px;top:25px" width="60" height="50" viewBox="2215 25 60 50" fill="none" stroke="#4a4e56" stroke-width="2.3" stroke-linejoin="round">
 <path d="M2257.3,42.5 C2262.5,43.5 2266.5,48 2266.5,53.5 C2266.5,56.5 2265.3,59.3 2263.2,61.4 L2266.5,66 L2258.5,64.5 C2256.5,65.3 2254.5,65.6 2252.3,65.6 C2248,65.6 2244.3,63.5 2242.3,60.3"/>
 <path d="M2237.3,32.3 C2245.5,32.3 2251.6,37.6 2251.6,44 C2251.6,50.4 2245.5,55.6 2237.3,55.6 C2235,55.6 2232.8,55.2 2230.9,54.4 L2224,57.5 L2226,51.4 C2224.2,49.3 2223.1,46.8 2223.1,44 C2223.1,37.6 2229.2,32.3 2237.3,32.3 Z" fill="#fbfbf5"/>
</svg>
<!-- compass -->
<svg class="abs" style="left:2320px;top:24px" width="52" height="52" viewBox="2320 24 52 52">
 <circle cx="2345.8" cy="49.8" r="16.8" fill="none" stroke="#4a4e56" stroke-width="2.2"/>
 <polygon points="2354.6,41.5 2350.3,53.3 2337.6,58.3 2342,46.5" fill="none" stroke="#4a4e56" stroke-width="2.2" stroke-linejoin="round"/>
 <circle cx="2346" cy="50" r="1.3" fill="#4a4e56"/>
</svg>
<!-- book icon -->
<svg class="abs" style="left:2398px;top:32px" width="34" height="36" viewBox="2398 32 34 36" fill="none" stroke="#4a8fd2" stroke-width="1.9" stroke-linejoin="round">
 <path d="M2404.5,36.5 L2423.5,36.5 A2,2 0 0 1 2425.5,38.5 L2425.5,57.5 L2405,57.5 A2.5,2.5 0 0 0 2402.5,60 L2402.5,38.5 A2,2 0 0 1 2404.5,36.5 Z"/>
 <path d="M2402.5,60 A2.8,2.8 0 0 0 2405.3,62.8 L2425.5,62.8" fill="#cfe6fb"/>
 <line x1="2407.5" y1="37" x2="2407.5" y2="57"/>
 <line x1="2411.5" y1="43" x2="2421.5" y2="43"/><line x1="2411.5" y1="48" x2="2421.5" y2="48"/>
</svg>
<!-- settings chevron -->
<svg class="abs" style="left:2762px;top:140px" width="36" height="28" viewBox="0 0 36 28"><polyline points="7,7.5 18,19.5 29,7.5" fill="none" stroke="#3b4049" stroke-width="2.8"/></svg>
<!-- filter chevron -->
<svg class="abs" style="left:2372px;top:300px" width="32" height="26" viewBox="0 0 32 26"><polyline points="6.5,7 16,19.5 25.5,7" fill="none" stroke="#6d7178" stroke-width="1.8"/></svg>
<!-- last 6 hours chevron (partially hidden) -->
<svg class="abs" style="left:2652px;top:300px" width="30" height="26" viewBox="0 0 30 26"><polyline points="6,7 15,19 24,7" fill="none" stroke="#b3b5ba" stroke-width="1.8"/></svg>
<!-- refresh icon -->
<svg class="abs" style="left:2734px;top:291px" width="40" height="40" viewBox="0 0 40 40" fill="none" stroke="#3b4d57" stroke-width="2">
 <path d="M8.5,18 A11.5,11 0 0 1 30.5,15.5"/><polyline points="31.2,9.3 31,16 24.8,15.5"/>
 <path d="M31.5,22.5 A11.5,11 0 0 1 9.5,25"/><polyline points="8.8,31 9,24.5 15.2,25"/>
</svg>
<!-- red annotation ellipse -->
<svg class="abs" style="left:2660px;top:255px" width="190" height="135" viewBox="2660 255 190 135"><ellipse cx="2753.5" cy="322.75" rx="73" ry="48.5" fill="none" stroke="#f42d6c" stroke-width="20.5"/></svg>
<!-- bottom fade -->
<div class="abs" style="left:423px;top:1660px;width:2459px;height:86px;background:linear-gradient(to bottom, rgba(30,30,45,0) 0%, rgba(30,30,45,0.035) 45%, rgba(30,30,45,0.12) 100%)"></div>
<!-- search fab -->
<svg class="abs" style="left:2740px;top:1604px" width="112" height="112" viewBox="2740 1604 112 112">
 <circle cx="2796" cy="1660" r="48.5" fill="#1f7b7b" stroke="#dffcf4" stroke-width="1"/>
 <circle cx="2791.2" cy="1653.5" r="20" fill="none" stroke="#eafcf8" stroke-width="4.6"/>
 <line x1="2806" y1="1669" x2="2818.5" y2="1683" stroke="#eafcf8" stroke-width="6.2" stroke-linecap="round"/>
 <path d="M2781,1658.5 Q2791.5,1666.5 2802,1658.5" fill="none" stroke="#eafcf8" stroke-width="3.2" stroke-linecap="round"/>
</svg>
<!-- scroll thumb at right edge -->
<div class="abs" style="left:2870px;top:1661px;width:20px;height:56px;background:#5d5e63;border:3px solid #141414;border-radius:14px 0 0 18px;box-sizing:border-box"></div>
<!-- sidebar right light edge -->
<div class="abs" style="left:423px;top:206px;width:1px;height:1540px;background:#f3f5f7"></div>

</div>
</body></html>
